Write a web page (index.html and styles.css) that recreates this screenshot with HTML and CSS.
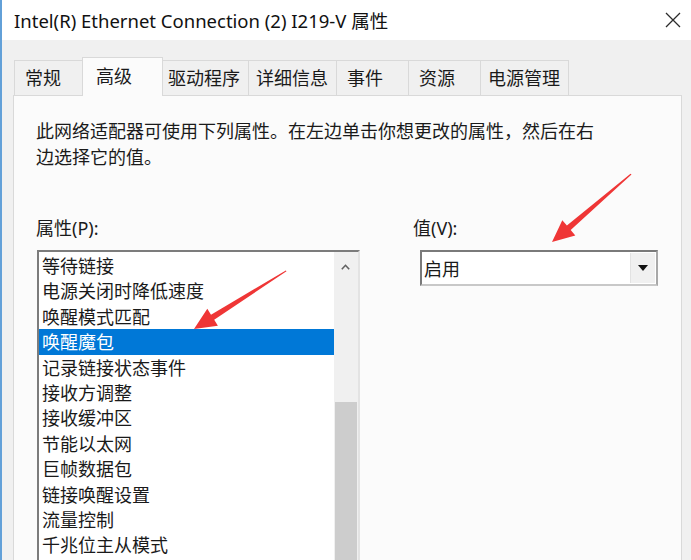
FILE: index.html
```html
<!DOCTYPE html>
<html lang="zh-CN">
<head>
<meta charset="utf-8">
<title>Intel(R) Ethernet Connection (2) I219-V 属性</title>
<link rel="stylesheet" href="styles.css">
</head>
<body>
<div class="window">
  <div class="titlebar">
    <span class="title">Intel(R) Ethernet Connection (2) I219-V 属性</span>
    <svg class="close" width="16" height="16" viewBox="0 0 16 16"><path d="M1 1 L15 15 M15 1 L1 15" stroke="#2b2b2b" stroke-width="1.3" fill="none"/></svg>
  </div>
  <div class="tabs">
    <div class="tab short first">常规</div>
    <div class="tab short active">高级</div>
    <div class="tab long">驱动程序</div>
    <div class="tab long">详细信息</div>
    <div class="tab short">事件</div>
    <div class="tab short">资源</div>
    <div class="tab long">电源管理</div>
  </div>
  <div class="panel">
    <p class="desc">此网络适配器可使用下列属性。在左边单击你想更改的属性，然后在右<br>边选择它的值。</p>
    <div class="cols">
      <div class="col-left">
        <div class="label">属性(P):</div>
        <div class="listbox">
          <ul class="items">
            <li>等待链接</li>
            <li>电源关闭时降低速度</li>
            <li>唤醒模式匹配</li>
            <li class="selected">唤醒魔包</li>
            <li>记录链接状态事件</li>
            <li>接收方调整</li>
            <li>接收缓冲区</li>
            <li>节能以太网</li>
            <li>巨帧数据包</li>
            <li>链接唤醒设置</li>
            <li>流量控制</li>
            <li>千兆位主从模式</li>
          </ul>
          <div class="scrollbar">
            <div class="sb-up"><svg width="9" height="6" viewBox="0 0 9 6"><path d="M0.8 5.2 L4.5 1.3 L8.2 5.2" stroke="#606060" stroke-width="1.6" fill="none"/></svg></div>
            <div class="sb-track"></div>
            <div class="sb-thumb"></div>
          </div>
        </div>
      </div>
      <div class="col-right">
        <div class="label">值(V):</div>
        <div class="select">
          <span class="select-text">启用</span>
          <span class="select-btn"><svg width="10" height="6" viewBox="0 0 10 6"><path d="M0 0 H10 L5 6 Z" fill="#111"/></svg></span>
        </div>
      </div>
    </div>
  </div>
  <svg class="annot" width="691" height="560" viewBox="0 0 691 560">
    <polygon fill="#ef3636" points="631.5,174.5 570.7,230.1 575.3,235.4 552,242 562.3,220.2 566.9,225.5 630.5,173.8"/>
    <polygon fill="#ef3636" points="286.5,271.3 214.2,319.8 217.9,325.8 194,329 207.3,308.8 211.0,314.8 285.8,270.4"/>
  </svg>
</div>
</body>
</html>
```
FILE: styles.css
```css
html, body {
  margin: 0;
  padding: 0;
}
body {
  width: 691px;
  height: 560px;
  overflow: hidden;
  background: #f0f0f0;
  font-family: "Noto Sans", "Noto Sans CJK SC", sans-serif;
  color: #1a1a1a;
}
.window {
  position: relative;
  width: 691px;
  height: 560px;
  box-sizing: border-box;
  border-left: 2px solid #62a0d8;
  background: #f0f0f0;
  overflow: hidden;
}
.titlebar {
  height: 40px;
  background: #ffffff;
  display: flex;
  align-items: center;
  justify-content: space-between;
  padding: 0 10px 0 12px;
}
.title {
  font-size: 18.5px;
  color: #111;
  white-space: nowrap;
}
.close {
  display: block;
  margin-top: -1px;
}
.tabs {
  display: flex;
  margin-top: 17px;
  padding-left: 12px;
  height: 39px;
  font-family: "Noto Sans CJK SC", sans-serif;
  font-size: 18px;
}
.tab {
  position: relative;
  z-index: 1;
  box-sizing: border-box;
  height: 35px;
  margin-top: 3px;
  padding: 0 0 0 7px;
  line-height: 33px;
  background: #f0f0f0;
  border: 1px solid #d9d9d9;
  border-bottom: none;
  margin-left: -1px;
  color: #1a1a1a;
  white-space: nowrap;
}
.tab.short {
  width: 73px;
  padding-left: 10px;
}
.tab.long {
  width: 89px;
}
.tab.first {
  margin-left: 0;
  width: 71px;
}
.tab.active {
  width: 81px;
  height: 39px;
  margin-top: 0;
  margin-left: -3px;
  margin-right: -2px;
  padding-left: 13px;
  line-height: 35px;
  background: #fbfbfb;
  z-index: 2;
}
.panel {
  position: relative;
  margin: -1px 0 0 11px;
  width: 669px;
  height: 500px;
  box-sizing: border-box;
  border: 1px solid #d9d9d9;
  background: #fbfbfb;
  padding: 22px 0 0 22px;
  font-family: "Noto Sans", "Noto Sans CJK SC", sans-serif;
  font-size: 18px;
}
.desc {
  margin: 0;
  line-height: 26px;
  white-space: nowrap;
}
.cols {
  display: flex;
  gap: 53px;
  margin-top: 45px;
}
.col-left {
  width: 324px;
}
.col-right {
  width: 245px;
}
.label {
  height: 26px;
  line-height: 26px;
  margin-bottom: 9px;
}
.listbox {
  margin-left: 1px;
  width: 323px;
  height: 320px;
  box-sizing: border-box;
  display: flex;
  background: #ffffff;
  border-top: 2px solid #7c7c7c;
  border-left: 2px solid #7c7c7c;
  border-right: 2px solid #e3e3e3;
}
.items {
  flex: 1;
  list-style: none;
  margin: 0;
  padding: 1px 0 0 0;
  font-family: "Noto Sans CJK SC", sans-serif;
}
.items li {
  height: 25.4px;
  line-height: 25.4px;
  padding-left: 3px;
  white-space: nowrap;
}
.items li.selected {
  background: #0078d7;
  color: #ffffff;
}
.scrollbar {
  width: 24px;
  display: flex;
  flex-direction: column;
  background: #f0f0f0;
}
.sb-up {
  height: 30px;
  display: flex;
  align-items: center;
  justify-content: center;
  padding-right: 2px;
}
.sb-track {
  height: 120px;
}
.sb-thumb {
  flex: 1;
  margin: 0 1px;
  background: #cdcdcd;
}
.select {
  margin-left: 7px;
  width: 238px;
  height: 36px;
  box-sizing: border-box;
  display: flex;
  align-items: stretch;
  background: #ffffff;
  border-top: 2px solid #7a7a7a;
  border-left: 2px solid #7a7a7a;
  border-right: 2px solid #a8a8a8;
  border-bottom: 2px solid #c8c8c8;
}
.select-text {
  flex: 1;
  padding-left: 2px;
  line-height: 32px;
  font-family: "Noto Sans CJK SC", sans-serif;
}
.select-btn {
  width: 24px;
  margin: 1px 1px 1px 0;
  background: #f0f0f0;
  border-left: 1px solid #e2e2e2;
  display: flex;
  align-items: center;
  justify-content: center;
}
.annot {
  position: absolute;
  left: -2px;
  top: 0;
  pointer-events: none;
  z-index: 5;
}
```
